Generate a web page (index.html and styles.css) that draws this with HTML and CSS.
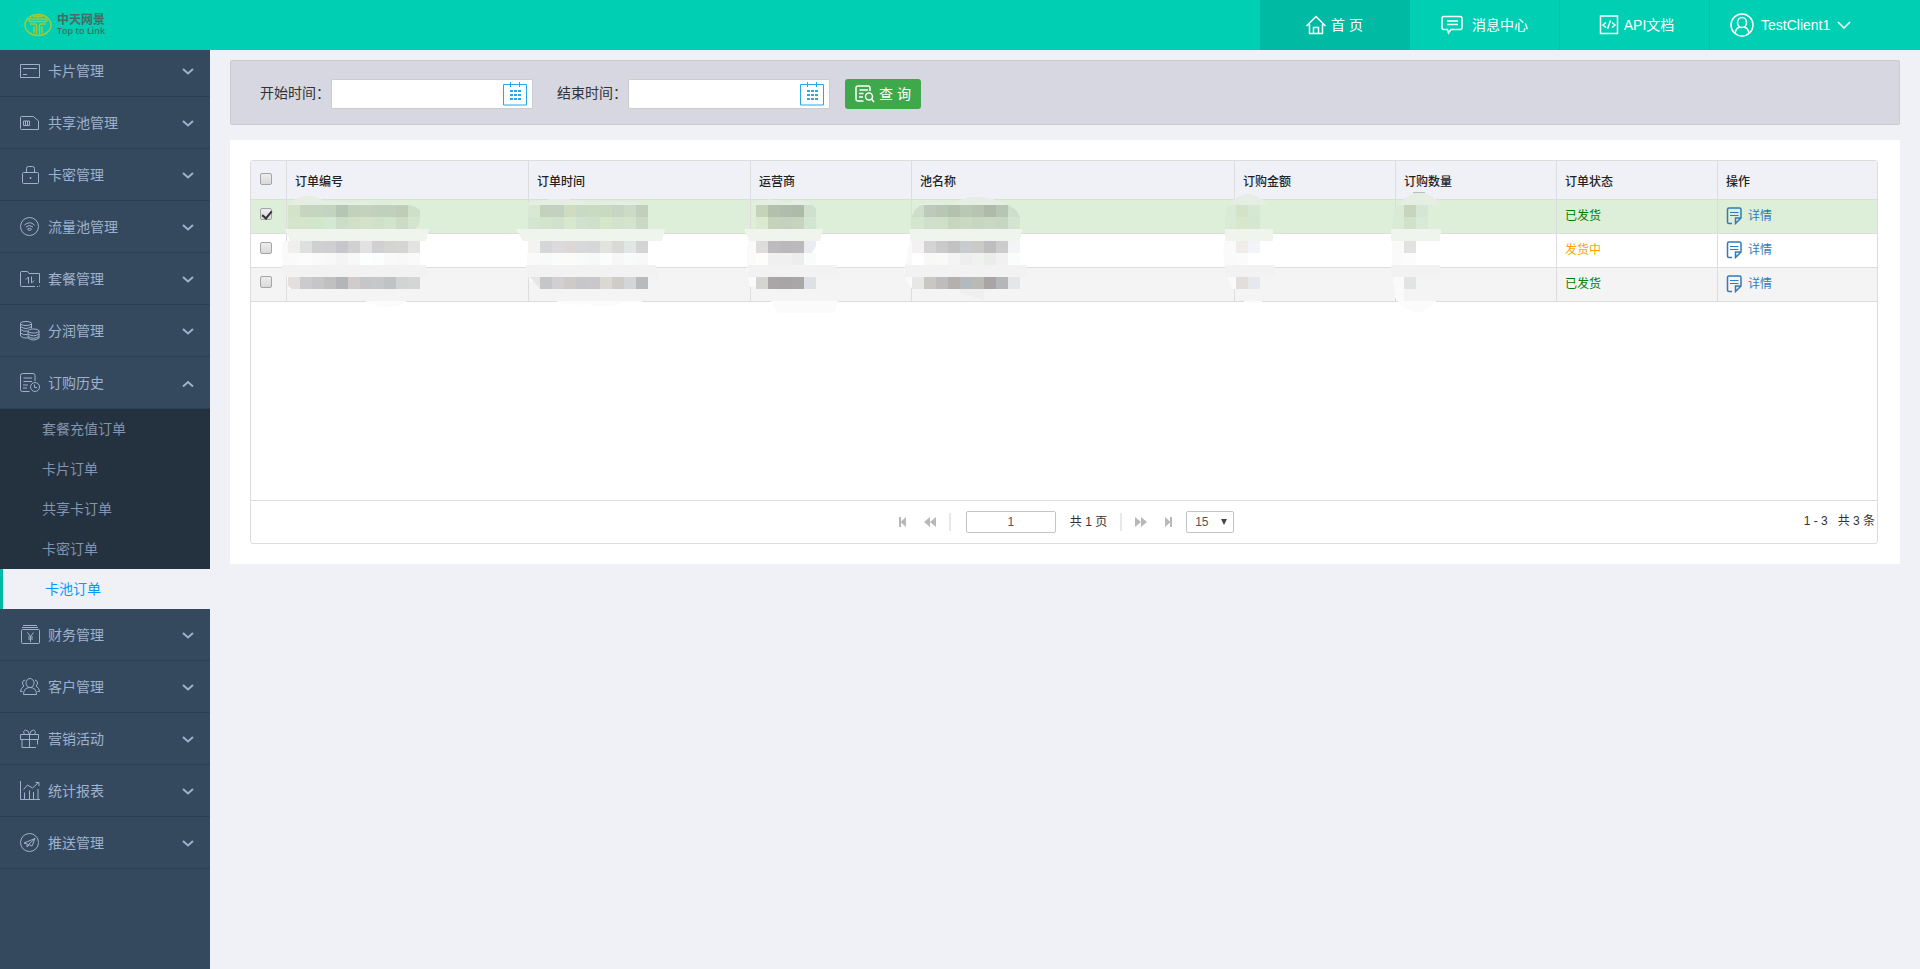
FILE: index.html
```html
<!DOCTYPE html>
<html lang="zh-CN">
<head>
<meta charset="utf-8">
<title>卡池订单</title>
<link rel="stylesheet" href="styles.css">
</head>
<body>
<header class="topbar">
  <a class="logo" href="#">
    <svg class="logo-mark" viewBox="0 0 28 24" width="28" height="24"><ellipse cx="14" cy="12" rx="13" ry="10.500"/><path d="M9 3.500h10M5 8.500q0-2.500 2-2.500h14q2 0 2 2.500M5 8.500h18M6 11h5.500q1 0 1 1.500v9M22 11h-5.500q-1 0-1 1.500v9M10 20v-6.500M18 20v-6.500M14 1v4"/></svg>
    <span class="logo-text"><b>中天网景</b><i>Top to Link</i></span>
  </a>
  <nav class="topnav">
    <a class="navlink current" href="#">
      <svg class="icon" viewBox="0 0 20 20" width="20" height="20"><path d="M.500 11L10 1.500l9.500 9.500M3.500 9v9.500h13V9M7.500 18.500v-6h5v6"/></svg>首 页</a>
    <a class="navlink wide-gap" href="#">
      <svg class="icon" viewBox="0 0 22 20" width="22" height="20"><path d="M3 1.500h16q2 0 2 2v9q0 2-2 2h-9l-2.500 3.500-1-3.500H3q-2 0-2-2v-9q0-2 2-2zM6 6h11M6 9.500h11"/></svg>消息中心</a>
    <a class="navlink api" href="#">
      <svg class="icon" viewBox="0 0 20 20" width="20" height="20"><path d="M1.500 1h17v17.500h-17zM7 7.500l-3 2.500 3 2.500M13 7.500l3 2.500-3 2.500M11.500 5.500l-3 8.500"/></svg>API文档</a>
    <a class="navlink user" href="#">
      <svg class="icon" viewBox="0 0 24 24" width="24" height="24"><circle cx="12" cy="12" r="11"/><ellipse cx="12" cy="9.500" rx="4.500" ry="5"/><path d="M5 20q1-5 5-6M19 20q-1-5-5-6"/></svg>TestClient1
      <svg class="icon" viewBox="0 0 14 8" width="14" height="8"><path d="M1 1l6 6 6-6"/></svg></a>
  </nav>
</header>
<div class="layout">
<aside class="sidebar">
  <ul class="menu">
    <li><a class="item" href="#"><svg class="icon" viewBox="0 0 20 20" width="20" height="20"><path d="M.500 3.500h19v13H.500zM3 7.500h14M3 13.500h4" /></svg>卡片管理<svg class="chev" viewBox="0 0 12 8" width="12" height="8"><path d="M1 2l5 4.500L11 2"/></svg></a></li>
    <li><a class="item" href="#"><svg class="icon" viewBox="0 0 20 20" width="20" height="20"><path d="M1.500 3.500h12l5 4.500v8.500h-17q-1 0-1-1v-11q0-1 1-1zM3.500 8h6v4.500h-6zM5.500 8v4.500M7.500 8v4.500"/></svg>共享池管理<svg class="chev" viewBox="0 0 12 8" width="12" height="8"><path d="M1 2l5 4.500L11 2"/></svg></a></li>
    <li><a class="item" href="#"><svg class="icon" viewBox="0 0 20 20" width="20" height="20"><path d="M3.500 7.500h14q1 0 1 1v9q0 1-1 1h-14q-1 0-1-1v-9q0-1 1-1zM6.500 7.500v-4q0-2 2-2h4q2 0 2 2v4M10 12.500h1v1h-1z"/></svg>卡密管理<svg class="chev" viewBox="0 0 12 8" width="12" height="8"><path d="M1 2l5 4.500L11 2"/></svg></a></li>
    <li><a class="item" href="#"><svg class="icon" viewBox="0 0 20 20" width="20" height="20"><circle cx="9.500" cy="9.500" r="9"/><path d="M4.500 8q5-4.500 10 0M6 10q3.500-3 7 0M7.500 12q2-1.500 4 0l-2 2z"/></svg>流量池管理<svg class="chev" viewBox="0 0 12 8" width="12" height="8"><path d="M1 2l5 4.500L11 2"/></svg></a></li>
    <li><a class="item" href="#"><svg class="icon" viewBox="0 0 20 20" width="20" height="20"><path d="M15 17.500H1.500q-1 0-1-1V3.500q0-1 1-1h6l1.500 2h10.500V14M17 17.500h1M19.500 16.500v1M6 10.500l2.500-2.500v6.500M11.500 7.500v6.500l2.500-2.500"/></svg>套餐管理<svg class="chev" viewBox="0 0 12 8" width="12" height="8"><path d="M1 2l5 4.500L11 2"/></svg></a></li>
    <li><a class="item" href="#"><svg class="icon" viewBox="0 0 20 20" width="20" height="20"><ellipse cx="6" cy="2.500" rx="5.500" ry="2"/><ellipse cx="13.500" cy="10" rx="5.500" ry="2"/><path d="M.500 2.500v12.500q2 2.500 7 2M11.500 2.500v5M.500 5.500q5.500 4 11 0M.500 8.500q3 2.500 7 1.500M.500 12q3 2.500 7 1.500M8 10v7q5.500 4 11 0v-7M8 13q5.500 3.500 11 0M8 15.500q5.500 3.500 11 0"/></svg>分润管理<svg class="chev" viewBox="0 0 12 8" width="12" height="8"><path d="M1 2l5 4.500L11 2"/></svg></a></li>
    <li><a class="item" href="#"><svg class="icon" viewBox="0 0 20 20" width="20" height="20"><path d="M9.500 18.500h-7q-2 0-2-2v-14q0-2 2-2h10.500q2 0 2 2V8M3.500 5h8.500M3.500 8.500h8.500M3 12h5M3 15h4"/><circle cx="15" cy="14" r="4.500"/><path d="M14.500 11.500v3H17"/></svg>订购历史<svg class="chev" viewBox="0 0 12 8" width="12" height="8"><path d="M1 7.500L6 3l5 4.500"/></svg></a>
      <ul class="submenu">
        <li><a href="#">套餐充值订单</a></li>
        <li><a href="#">卡片订单</a></li>
        <li><a href="#">共享卡订单</a></li>
        <li><a href="#">卡密订单</a></li>
        <li><a class="current" href="#">卡池订单</a></li>
      </ul>
    </li>
    <li><a class="item" href="#"><svg class="icon" viewBox="0 0 20 20" width="20" height="20"><path d="M3 .500h14M2 2.500h16M2.500 4.500h16q1 0 1 1v12q0 1-1 1h-16q-1 0-1-1v-12q0-1 1-1zM7.500 7.500l3 4 3-4M10.500 11.500V17M8 12h5M8 14h5"/></svg>财务管理<svg class="chev" viewBox="0 0 12 8" width="12" height="8"><path d="M1 2l5 4.500L11 2"/></svg></a></li>
    <li><a class="item" href="#"><svg class="icon" viewBox="0 0 20 20" width="20" height="20"><ellipse cx="10" cy="6" rx="4" ry="4.500"/><path d="M3.500 17.500q0-7 6.500-7t6.500 7zM5 3q-3 .500-2.500 4 .500 1 1.500 2-3.500 2-3.500 5.500h2M15 3q3 .500 2.500 4-.500 1-1.500 2 3.500 2 3.500 5.500h-2"/></svg>客户管理<svg class="chev" viewBox="0 0 12 8" width="12" height="8"><path d="M1 2l5 4.500L11 2"/></svg></a></li>
    <li><a class="item" href="#"><svg class="icon" viewBox="0 0 20 20" width="20" height="20"><path d="M.500 5.500h18v5H.500zM2 10.500v8h14M17.500 10.500v5M9.500 5.500v13M9.500 5.500q-1-4.500-4-4.500-3 1-1 4.500M9.500 5.500q1-4.500 4-4.500 3 1 1 4.500"/></svg>营销活动<svg class="chev" viewBox="0 0 12 8" width="12" height="8"><path d="M1 2l5 4.500L11 2"/></svg></a></li>
    <li><a class="item" href="#"><svg class="icon" viewBox="0 0 20 20" width="20" height="20"><path d="M.500 0v18.500H20M4.500 18v-6.500M9.500 18V9.500M13.500 18v-7M18 18V8M3.500 8.500l4-4.500 5 3 6-5.500M15.500 1.500h3.500V5"/></svg>统计报表<svg class="chev" viewBox="0 0 12 8" width="12" height="8"><path d="M1 2l5 4.500L11 2"/></svg></a></li>
    <li><a class="item" href="#"><svg class="icon" viewBox="0 0 20 20" width="20" height="20"><circle cx="9.500" cy="9.500" r="9"/><path d="M4 10L15 5.500 12 13l-3.500-1.500zM8.500 11.500L15 5.500M7 11.500V14l2-2"/></svg>推送管理<svg class="chev" viewBox="0 0 12 8" width="12" height="8"><path d="M1 2l5 4.500L11 2"/></svg></a></li>
  </ul>
</aside>
<main class="content">
  <form class="query">
    <label for="start">开始时间：</label>
    <span class="datebox"><input id="start" type="text"><svg class="cal" viewBox="0 0 24 24" width="24" height="24"><path d="M.500 2.500h23v20.500H.500zM7.500 0v5M16.500 0v5"/><path class="dots" d="M7 9h3M11 9h3M15 9h3M7 13h3M11 13h3M15 13h3M7 17h3M11 17h3M15 17h3"/></svg></span>
    <label for="end">结束时间：</label>
    <span class="datebox"><input id="end" type="text"><svg class="cal" viewBox="0 0 24 24" width="24" height="24"><path d="M.500 2.500h23v20.500H.500zM7.500 0v5M16.500 0v5"/><path class="dots" d="M7 9h3M11 9h3M15 9h3M7 13h3M11 13h3M15 13h3M7 17h3M11 17h3M15 17h3"/></svg></span>
    <button class="search" type="button"><svg class="icon bold" viewBox="0 0 20 18" width="20" height="18"><path d="M8.500 16H3q-2 0-2-2V3q0-2 2-2h10q2 0 2 2v3M4.500 5h8.500M4 8.500h4.500M4 12h4"/><circle cx="14" cy="11.500" r="3.500"/><path d="M16.500 14l2.500 3"/></svg>查 询</button>
  </form>
  <section class="panel">
    <div class="grid">
      <div class="grid-body">
      <table class="orders">
        <colgroup><col class="c-check"><col class="c-no"><col class="c-time"><col class="c-std"><col class="c-name"><col class="c-std"><col class="c-std"><col class="c-std"><col></colgroup>
        <thead><tr>
          <th><input type="checkbox" aria-label="全选"></th><th>订单编号</th><th>订单时间</th><th>运营商</th><th>池名称</th><th>订购金额</th><th>订购数量</th><th>订单状态</th><th>操作</th>
        </tr></thead>
        <tbody>
        <tr class="selected">
          <td><input type="checkbox" checked aria-label="选择第1行"></td>
          <td><svg class="mosaic" viewBox="267 190 240 130" width="240" height="130">
            <path class="top" d="M288 205q8-9 20-9 8 0 16 5l30 2 40 1 24 1z"/><path class="haze" d="M284 241q-5 12 0 24l5 24h10v-48z"/><path class="band1" d="M285 229h144l-3 12H290z"/><path class="band2" d="M282 265h144l2 12H283z"/><path class="low" d="M365 301h42q-18 12-42 0z"/>
            <rect x="288" y="205" fill="#d3e3ca"/><rect x="300" y="205" fill="#c5d5bf"/><rect x="312" y="205" fill="#c5d5c0"/><rect x="324" y="205" fill="#c2d3bf"/><rect x="336" y="205" fill="#b5c6b2"/><rect x="348" y="205" fill="#c1d1bc"/><rect x="360" y="205" fill="#c2d2bf"/><rect x="372" y="205" fill="#c0d0bb"/><rect x="384" y="205" fill="#bfd0bc"/><rect x="396" y="205" fill="#bfccb8"/><path fill="#cfe0c9" d="M408 205q8 1 12 6v6h-12z"/>
            <rect x="288" y="217" fill="#d5e5cb"/><rect x="300" y="217" fill="#d5e5cb"/><rect x="312" y="217" fill="#d2e6cc"/><rect x="324" y="217" fill="#d3e7d3"/><rect x="336" y="217" fill="#cbdcc8"/><rect x="348" y="217" fill="#cfdfc8"/><rect x="360" y="217" fill="#d3e2c8"/><rect x="372" y="217" fill="#d0e1ca"/><rect x="384" y="217" fill="#d0e5cb"/><rect x="396" y="217" fill="#cbdbc6"/><path fill="#d5e4cd" d="M408 217h12q0 8-4 12h-8z"/>
            <rect x="288" y="241" fill="#f0efee"/><rect x="300" y="241" fill="#dee0df"/><rect x="312" y="241" fill="#d0cfd1"/><rect x="324" y="241" fill="#cfced0"/><rect x="336" y="241" fill="#c7c6cc"/><rect x="348" y="241" fill="#d2d1d2"/><rect x="360" y="241" fill="#e2e2e3"/><rect x="372" y="241" fill="#d0d0d2"/><rect x="384" y="241" fill="#d4d4d1"/><rect x="396" y="241" fill="#d5d5d4"/><rect x="408" y="241" fill="#e3e3e1"/>
            <rect x="288" y="253" fill="#fafafa"/><rect x="300" y="253" fill="#fcfcfc"/><rect x="312" y="253" fill="#fafafa"/><rect x="324" y="253" fill="#f8f8f8"/><rect x="336" y="253" fill="#f4f4f5"/><rect x="348" y="253" fill="#f8f8f8"/><rect x="360" y="253" fill="#fbfffe"/><rect x="372" y="253" fill="#fcfdfd"/><rect x="384" y="253" fill="#f8f9f8"/><rect x="396" y="253" fill="#f8f8f8"/><rect x="408" y="253" fill="#fafafa"/>
            <path fill="#e2dfde" d="M288 277h12v12h-9l-3-4z"/><rect x="300" y="277" fill="#cbcbcd"/><rect x="312" y="277" fill="#c6c6c8"/><rect x="324" y="277" fill="#c0c0c1"/><rect x="336" y="277" fill="#b4b5b7"/><rect x="348" y="277" fill="#d0cccc"/><rect x="360" y="277" fill="#c4c6c8"/><rect x="372" y="277" fill="#c5c7c8"/><rect x="384" y="277" fill="#bfc3c4"/><rect x="396" y="277" fill="#d2d3d3"/><rect x="408" y="277" fill="#d5d5d5"/>
          </svg></td>
          <td><svg class="mosaic" viewBox="509 190 240 130" width="240" height="130">
            <path class="top" d="M526 205q4-5 30-6 20 0 30 3h50l13 3z"/><path class="haze" d="M528 241h12v36l-10 6-3-18z"/><path class="band1" d="M516 229h149l-3 12H523z"/><path class="band2" d="M526 265h130l2 12H528z"/><path class="low" d="M555 301h90q-10 2-20 1-20 7-35 2-20 2-35-3z"/>
            <rect x="528" y="205" fill="#d8e8d2"/><rect x="540" y="205" fill="#c3d1bd"/><rect x="552" y="205" fill="#c2d1c0"/><rect x="564" y="205" fill="#cfdcc2"/><rect x="576" y="205" fill="#c8d9c5"/><rect x="588" y="205" fill="#cadbc4"/><rect x="600" y="205" fill="#c8dac0"/><rect x="612" y="205" fill="#c7d6c2"/><rect x="624" y="205" fill="#cbdbc7"/><rect x="636" y="205" fill="#c1cfbc"/>
            <rect x="528" y="217" fill="#d4e5d1"/><rect x="540" y="217" fill="#d3e4cd"/><rect x="552" y="217" fill="#d0e1cd"/><rect x="564" y="217" fill="#d7e8cd"/><rect x="576" y="217" fill="#d0e2cd"/><rect x="588" y="217" fill="#cee0ca"/><rect x="600" y="217" fill="#d5e6cb"/><rect x="612" y="217" fill="#d3e2cc"/><rect x="624" y="217" fill="#d3e3cc"/><rect x="636" y="217" fill="#cad9c6"/>
            <rect x="528" y="241" fill="#f4f3f2"/><rect x="540" y="241" fill="#d5d6d8"/><rect x="552" y="241" fill="#dcdadf"/><rect x="564" y="241" fill="#ddd7d7"/><rect x="576" y="241" fill="#d7d8da"/><rect x="588" y="241" fill="#d6d7d9"/><rect x="600" y="241" fill="#e2e3de"/><rect x="612" y="241" fill="#dbd9d5"/><rect x="624" y="241" fill="#e1e6e7"/><rect x="636" y="241" fill="#d4d4d4"/>
            <rect x="528" y="253" fill="#fafafa"/><rect x="540" y="253" fill="#f8fafa"/><rect x="552" y="253" fill="#fbfbfb"/><rect x="564" y="253" fill="#fbfcf9"/><rect x="576" y="253" fill="#f9fbfb"/><rect x="588" y="253" fill="#f7f9f9"/><rect x="600" y="253" fill="#fbfcfc"/><rect x="612" y="253" fill="#f7f7f7"/><rect x="624" y="253" fill="#f9fafa"/><rect x="636" y="253" fill="#f8f8f8"/>
            <path fill="#e8e6e4" d="M530 277h10v12z"/><rect x="540" y="277" fill="#c5c6c8"/><rect x="552" y="277" fill="#d2cfd2"/><rect x="564" y="277" fill="#cfcaca"/><rect x="576" y="277" fill="#c7c7c9"/><rect x="588" y="277" fill="#c8c8ca"/><rect x="600" y="277" fill="#dad8d3"/><rect x="612" y="277" fill="#cfcbc9"/><rect x="624" y="277" fill="#d3d5d7"/><rect x="636" y="277" fill="#b9babc"/>
          </svg></td>
          <td><svg class="mosaic" viewBox="731 190 240 130" width="240" height="130">
            <path class="top" d="M750 205q18-10 36-2 16-5 26 2z"/><path class="haze" d="M748 241h10v46h-8q-5-20-2-46z"/><path class="band1" d="M744 229h79l-3 12h-71z"/><path class="band2" d="M748 265h89l2 12h-91z"/><path class="low" d="M771 301h67l-3 12h-56q-5-4-8-12z"/>
            <rect x="756" y="205" fill="#c5d3ba"/><rect x="768" y="205" fill="#b2c0ad"/><rect x="780" y="205" fill="#afbdab"/><rect x="792" y="205" fill="#aebbaa"/><path fill="#cfe0cc" d="M804 205h8l4 4v8h-12z"/>
            <rect x="756" y="217" fill="#d9ead0"/><rect x="768" y="217" fill="#c5d3ba"/><rect x="780" y="217" fill="#c3d1be"/><rect x="792" y="217" fill="#c6d4be"/><rect x="804" y="217" fill="#d2e5d0"/>
            <rect x="756" y="241" fill="#dedddb"/><rect x="768" y="241" fill="#bebbbe"/><rect x="780" y="241" fill="#bbb8bb"/><rect x="792" y="241" fill="#bbb9bb"/><path fill="#eaecf1" d="M804 241h12v5l-4 7h-8z"/>
            <rect x="756" y="253" fill="#fdfdfb"/><rect x="768" y="253" fill="#f0f0f0"/><rect x="780" y="253" fill="#f0f0f0"/><rect x="792" y="253" fill="#ededed"/><rect x="804" y="253" fill="#fafcfb"/>
            <rect x="756" y="277" fill="#d4d4d1"/><rect x="768" y="277" fill="#aaa6a7"/><rect x="780" y="277" fill="#a8a5a6"/><rect x="792" y="277" fill="#a9a7a8"/><rect x="804" y="277" fill="#dfe0e5"/>
          </svg></td>
          <td><svg class="mosaic" viewBox="892 190 240 130" width="240" height="130">
            <path class="top" d="M918 205q16-6 30 1 14-9 28-9 16 0 32 8z"/><path class="haze" d="M910 241h6v48h-4q-10-12-7-24z"/><path class="band1" d="M910 229h112l-2 12H910z"/><path class="band2" d="M905 265h122v12H905z"/><path fill="#eeefee" d="M960 289h24v11l-24-7z"/>
            <path fill="#cedecb" d="M912 217q2-9 10-12h2v12z"/><rect x="924" y="205" fill="#bccab9"/><rect x="936" y="205" fill="#b9c5b5"/><rect x="948" y="205" fill="#b3c1af"/><rect x="960" y="205" fill="#b9c8b4"/><rect x="972" y="205" fill="#b7c4b1"/><rect x="984" y="205" fill="#afbba8"/><rect x="996" y="205" fill="#b7c6b4"/><path fill="#cedfcb" d="M1008 205q9 4 12 12h-12z"/>
            <rect x="912" y="217" fill="#d4e5d0"/><rect x="924" y="217" fill="#d0dfcb"/><rect x="936" y="217" fill="#cfe0c9"/><rect x="948" y="217" fill="#c8d6c0"/><rect x="960" y="217" fill="#cad9c2"/><rect x="972" y="217" fill="#c6d6c0"/><rect x="984" y="217" fill="#c9d8c2"/><rect x="996" y="217" fill="#c7d6c3"/><rect x="1008" y="217" fill="#d3e4d0"/>
            <rect x="912" y="241" fill="#f3f1f3"/><rect x="924" y="241" fill="#d5d4d4"/><rect x="936" y="241" fill="#cacaca"/><rect x="948" y="241" fill="#c2c2c2"/><rect x="960" y="241" fill="#c8ccce"/><rect x="972" y="241" fill="#cbcac6"/><rect x="984" y="241" fill="#bebebf"/><rect x="996" y="241" fill="#cccccf"/><rect x="1008" y="241" fill="#f3f4f7"/>
            <rect x="912" y="253" fill="#fff"/><rect x="924" y="253" fill="#f8f8f7"/><rect x="936" y="253" fill="#f9f9f9"/><rect x="948" y="253" fill="#f4f4f4"/><rect x="960" y="253" fill="#edeeed"/><rect x="972" y="253" fill="#f0f2f1"/><rect x="984" y="253" fill="#ececeb"/><rect x="996" y="253" fill="#f1f1f1"/><rect x="1008" y="253" fill="#fbfcfc"/>
            <rect x="912" y="277" fill="#e7e7e7"/><rect x="924" y="277" fill="#c8c7c4"/><rect x="936" y="277" fill="#bdbdbd"/><rect x="948" y="277" fill="#b3b0ae"/><rect x="960" y="277" fill="#b4b9bd"/><rect x="972" y="277" fill="#babab5"/><rect x="984" y="277" fill="#a9a5a7"/><rect x="996" y="277" fill="#b5b6b8"/><rect x="1008" y="277" fill="#e5e6e8"/>
          </svg></td>
          <td><svg class="mosaic" viewBox="1215 190 100 130" width="100" height="130">
            <path class="top" d="M1228 205q20-22 40 0z"/><path fill="#d9ebd4" d="M1228 205h9v24h-12q-1-14 3-24z"/><path class="haze" d="M1224 241h12v48h-3q-12-20-9-48z"/><path class="band1" d="M1225 229h48v12h-48z"/><path class="band2" d="M1225 265h50v12h-50z"/><path class="low" d="M1243 301h20q-10 5-20 0z"/>
            <rect x="1236" y="205" fill="#d4e2ca"/><rect x="1248" y="205" fill="#d4e8d2"/><rect x="1236" y="217" fill="#d6e7cc"/><rect x="1248" y="217" fill="#d4e7d0"/><rect x="1236" y="241" fill="#f0ecea"/><rect x="1248" y="241" fill="#f2f4f9"/><rect x="1236" y="253" fill="#fbfbfb"/><rect x="1236" y="277" fill="#e2dedb"/><rect x="1248" y="277" fill="#e7e8ee"/>
          </svg></td>
          <td><svg class="mosaic" viewBox="1376 190 100 130" width="100" height="130">
            <path class="top" d="M1399 205q20-26 42 0z"/><path fill="#b9bcc2" d="M1413 192h12v1h-12z"/><path fill="#d9ebd4" d="M1398 205h6v24h-12q1-16 6-24z"/><path class="haze" d="M1392 241h12v60h-8q-6-30-4-60z"/><path class="band1" d="M1391 229h50l-1 12h-49z"/><path class="band2" d="M1391 265h49v12h-49z"/><path class="low" d="M1397 301h40q-20 22-40 0z"/>
            <rect x="1404" y="205" fill="#c8d5bd"/><rect x="1416" y="205" fill="#d4e7d4"/><rect x="1404" y="217" fill="#d1e2ca"/><rect x="1416" y="217" fill="#d8ead6"/><rect x="1404" y="241" fill="#e3e2e1"/><rect x="1404" y="253" fill="#fcfcfc"/><rect x="1404" y="277" fill="#e2e4e4"/>
          </svg></td>
          <td class="done">已发货</td>
          <td><a class="detail" href="#"><svg class="icon bold" viewBox="0 0 16 18" width="16" height="18"><path d="M6 16.500H3q-1.500 0-1.500-1.500V2.500Q1.500 1 3 1h10.500Q15 1 15 2.500V11l-5.500 5.500v-5.500H15"/><path class="thin" d="M4 5.500h8.500M4 8.500h8.500"/></svg>详情</a></td>
        </tr>
        <tr>
          <td><input type="checkbox" aria-label="选择第2行"></td><td></td><td></td><td></td><td></td><td></td><td></td><td class="pending">发货中</td>
          <td><a class="detail" href="#"><svg class="icon bold" viewBox="0 0 16 18" width="16" height="18"><path d="M6 16.500H3q-1.500 0-1.500-1.500V2.500Q1.500 1 3 1h10.500Q15 1 15 2.500V11l-5.500 5.500v-5.500H15"/><path class="thin" d="M4 5.500h8.500M4 8.500h8.500"/></svg>详情</a></td>
        </tr>
        <tr class="alt">
          <td><input type="checkbox" aria-label="选择第3行"></td><td></td><td></td><td></td><td></td><td></td><td></td><td class="done">已发货</td>
          <td><a class="detail" href="#"><svg class="icon bold" viewBox="0 0 16 18" width="16" height="18"><path d="M6 16.500H3q-1.500 0-1.500-1.500V2.500Q1.500 1 3 1h10.500Q15 1 15 2.500V11l-5.500 5.500v-5.500H15"/><path class="thin" d="M4 5.500h8.500M4 8.500h8.500"/></svg>详情</a></td>
        </tr>
        </tbody>
      </table>
      </div>
      <div class="pager">
        <div class="pager-mid">
          <button type="button" aria-label="首页"><svg viewBox="0 0 12 12" width="12" height="12"><path d="M2 1h2v4.500L9 1v10L4 6.500V11H2z"/></svg></button>
          <button type="button" aria-label="上一页"><svg viewBox="0 0 12 12" width="12" height="12"><path d="M6 1v10L0 6zM12 1v10L6 6z"/></svg></button>
          <span class="sep"></span>
          <input class="page-no" type="text" value="1" aria-label="页码">
          <span class="pages">共 1 页</span>
          <span class="sep"></span>
          <button type="button" aria-label="下一页"><svg viewBox="0 0 12 12" width="12" height="12"><path d="M0 1v10l6-5zM6 1v10l6-5z"/></svg></button>
          <button type="button" aria-label="末页"><svg viewBox="0 0 12 12" width="12" height="12"><path d="M10 1H8v4.500L3 1v10l5-4.500V11h2z"/></svg></button>
          <span class="sizebox"><select class="size" aria-label="每页条数"><option>15</option></select></span>
        </div>
        <span class="total">1 - 3 &nbsp; 共 3 条</span>
      </div>
    </div>
  </section>
</main>
</div>
</body>
</html>
```
FILE: styles.css
```css
* { box-sizing: border-box; }
body {
  margin: 0;
  min-height: 100vh;
  display: flex;
  flex-direction: column;
  background: #f0f1f7;
  color: #333;
  font: 14px/20px "Liberation Sans", "Noto Sans CJK SC", sans-serif;
}
a { color: inherit; text-decoration: none; }
ul { list-style: none; margin: 0; padding: 0; }
svg { flex: none; }
input, button, select { font: inherit; color: inherit; }
.icon, .chev, .cal, .logo-mark { fill: none; stroke: currentColor; stroke-width: 1; }
.icon.bold { stroke-width: 1.5; }

.topbar {
  height: 50px;
  display: flex;
  justify-content: space-between;
  background: #00cfb4;
  color: #fff;
}
.logo { display: flex; align-items: center; gap: 5px; padding-left: 24px; color: #4a6b62; }
.logo-mark { color: #9ccb3c; stroke-width: 1.5; }
.logo-text { display: flex; flex-direction: column; }
.logo-text b { font-size: 12px; line-height: 11px; }
.logo-text i { font: normal 600 9px/9px "Open Sans", sans-serif; }
.topnav { display: flex; }
.navlink {
  width: 150px;
  display: flex;
  align-items: center;
  justify-content: center;
  gap: 5px;
  border-right: 1px solid #00c0a6;
}
.navlink .icon { stroke-width: 1.5; }
.navlink.wide-gap { gap: 9px; }
.navlink.api { padding-left: 4px; }
.navlink.current { background: #00baa3; border-color: #00baa3; }
.navlink.user { width: 210px; gap: 7px; justify-content: flex-start; padding-left: 20px; border: 0; }

.layout { flex: 1; display: flex; }
.sidebar { width: 210px; flex: none; background: #34495e; color: #a0b1cd; overflow: hidden; }
.menu { margin-top: -5px; }
.item {
  height: 52px;
  display: flex;
  align-items: center;
  gap: 8px;
  padding: 0 16px 0 20px;
  border-bottom: 1px solid #2c4054;
}
.chev { margin-left: auto; stroke-width: 2; }
.submenu { background: #243240; color: #8494ae; }
.submenu a { display: block; padding-left: 42px; line-height: 40px; }
.submenu .current { background: #f0f1f7; border-left: 3px solid #00baa3; color: #09f; }

.content { flex: 1; min-width: 0; padding: 10px 20px; }
.query {
  display: flex;
  align-items: center;
  padding: 18px 29px 15px;
  background: #d6d7e0;
  border: 1px solid #ccc;
  border-radius: 2px;
}
.query label { width: 71px; padding-bottom: 3px; white-space: nowrap; }
.datebox {
  width: 202px;
  height: 30px;
  margin-right: 24px;
  display: flex;
  align-items: center;
  padding-right: 5px;
  background: #fff;
  border: 1px solid #ccc;
  border-radius: 2px;
}
.datebox:nth-of-type(2) { margin-right: 15px; }
.datebox input { flex: 1; min-width: 0; height: 28px; border: 0; background: none; outline: 0; padding: 0 6px; }
.cal { color: #2ba6e8; }
.cal .dots { stroke-width: 2; }
.search {
  width: 76px;
  height: 30px;
  display: flex;
  align-items: center;
  justify-content: center;
  gap: 4px;
  padding: 0;
  border: 0;
  border-radius: 3px;
  background: #3fa84c;
  color: #fff;
}

.panel { margin-top: 15px; padding: 20px 22px 20px 20px; background: #fff; }
.grid { border: 1px solid #ddd; border-radius: 3px; font-size: 12px; }
.grid-body { min-height: 339px; }
.orders { width: 100%; table-layout: fixed; border-spacing: 0; }
.c-check { width: 36px; }
.c-no { width: 242px; }
.c-time { width: 222px; }
.c-std { width: 161px; }
.c-name { width: 323px; }
th, td {
  padding: 0 8px;
  border-right: 1px solid #ddd;
  border-bottom: 1px solid #ddd;
  text-align: left;
  position: relative;
  white-space: nowrap;
}
th:last-child, td:last-child { border-right: 0; }
th { height: 39px; padding-top: 3px; background: #f0f1f7; font-weight: 500; color: #222; }
td { height: 34px; padding-bottom: 1px; }
th:first-child, td:first-child { padding: 0 9px 4px; line-height: 0; }
th:first-child { padding-bottom: 2px; }
td:first-child { padding-bottom: 6px; }
.selected td { background: #ddefd8; }
.alt td { background: #f4f4f4; }
.done { color: green; }
.pending { color: orange; }
.detail { display: flex; align-items: center; gap: 6px; color: #337ab7; }
.detail .thin { stroke-width: 1; }
.orders input {
  appearance: none;
  width: 12px;
  height: 12px;
  margin: 0;
  border: 1px solid #a5a5a5;
  border-radius: 2px;
  background: linear-gradient(#ededed, #d9d9d9);
  position: relative;
}
.orders input:checked::after {
  content: "";
  position: absolute;
  left: 3px;
  top: 0;
  width: 4px;
  height: 8px;
  border: solid #333;
  border-width: 0 2px 2px 0;
  transform: rotate(40deg);
}
.mosaic { position: absolute; z-index: 1; left: -20px; top: -10px; pointer-events: none; shape-rendering: crispEdges; }
.mosaic rect { width: 12px; height: 12px; }
.top { fill: #e6eee4; }
.band1 { fill: #eff5ed; }
.band2 { fill: #f2f2f2; }
.haze { fill: #fafafa; }
.low { fill: #fbfbfb; }

.pager {
  height: 43px;
  display: grid;
  grid-template-columns: 1fr auto 1fr;
  align-items: center;
  border-top: 1px solid #ddd;
}
.pager-mid { grid-column: 2; display: flex; align-items: center; padding-left: 3px; }
.pager button { display: flex; padding: 0; margin-right: 15px; border: 0; background: none; }
.pager button:nth-of-type(2) { margin-right: 13px; }
.pager button:nth-of-type(4) { margin-right: 12px; }
.pager button svg { fill: #b8b8b8; }
.sep { width: 2px; height: 18px; background: #e8e8e8; }
.page-no {
  width: 90px;
  height: 22px;
  margin: 0 14px 0 15px;
  padding: 0;
  border: 1px solid #c4c4c4;
  border-radius: 2px;
  text-align: center;
  color: #555;
}
.pages { margin-right: 13px; }
.pages + .sep { margin-right: 13px; }
.sizebox { position: relative; display: flex; }
.sizebox::after {
  content: "";
  position: absolute;
  right: 7px;
  top: 8px;
  border: 3px solid transparent;
  border-top: 6px solid #444;
  border-bottom: 0;
  pointer-events: none;
}
.size { appearance: none; width: 48px; height: 22px; padding: 0 8px; border: 1px solid #c4c4c4; border-radius: 2px; background: #fff; color: #555; }
.total { justify-self: end; padding: 0 2px 3px 0; }
```
